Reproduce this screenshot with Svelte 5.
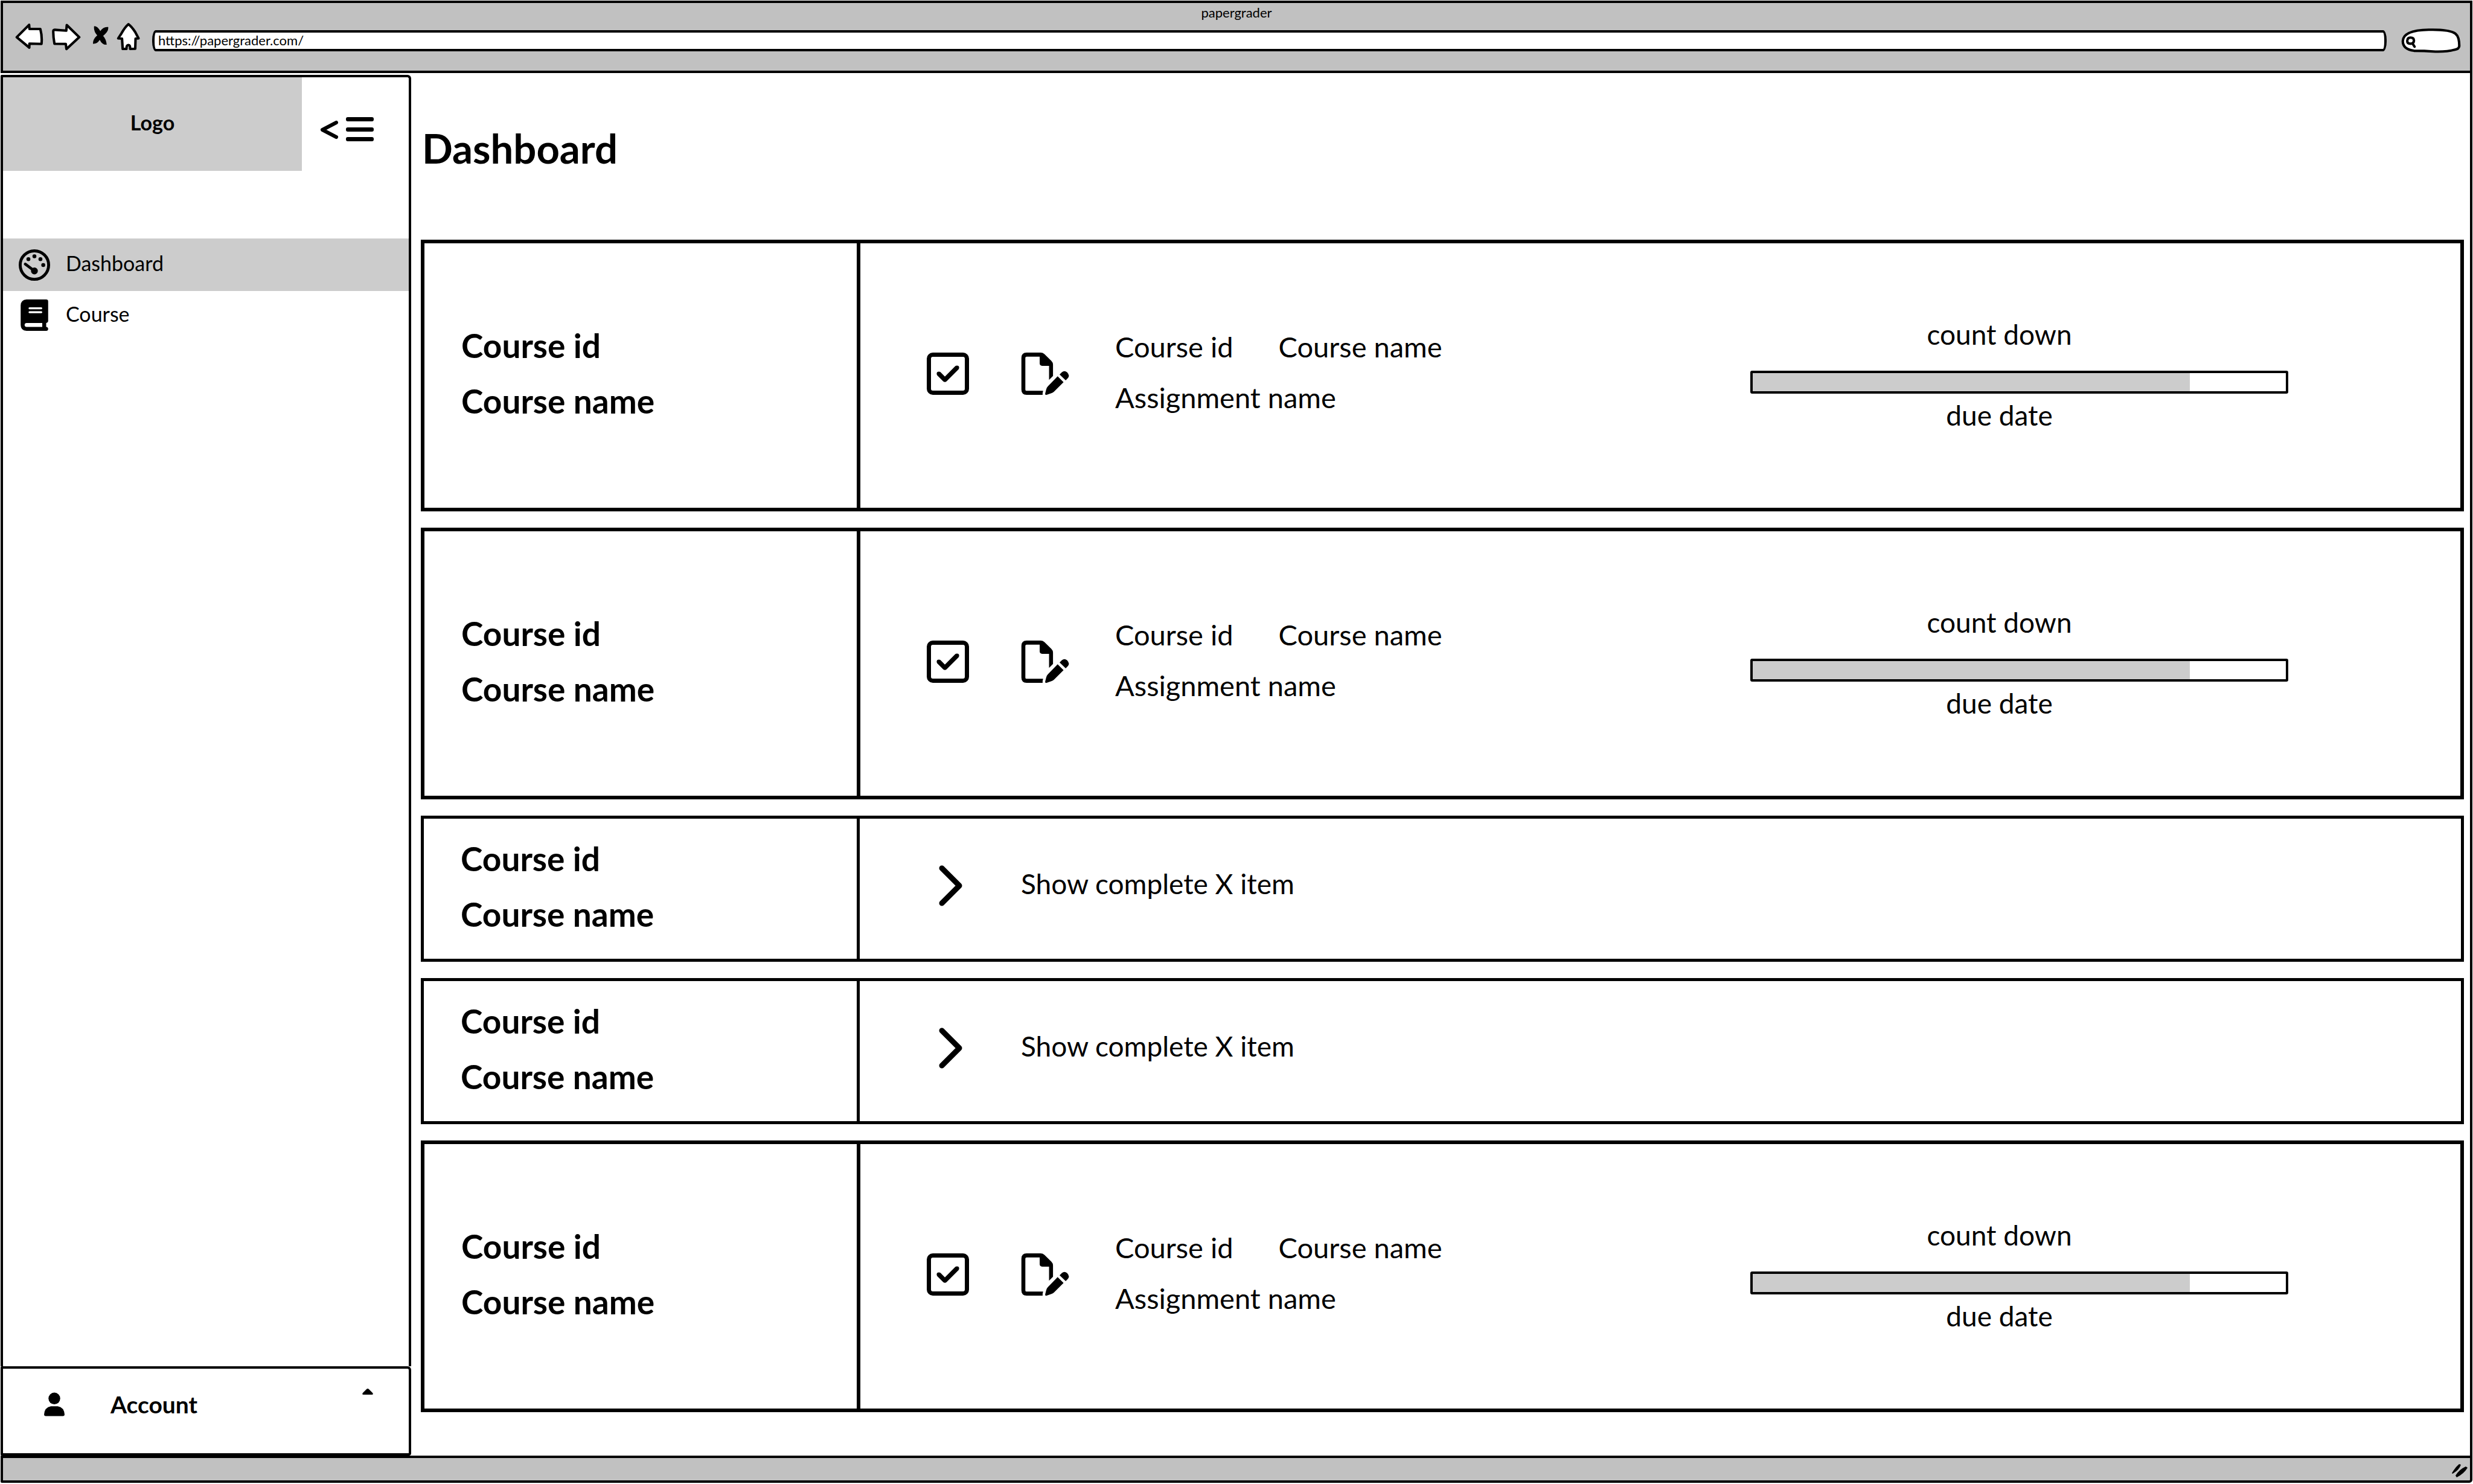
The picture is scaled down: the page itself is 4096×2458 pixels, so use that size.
<script>
  const courses = [
    { kind: 'task', done: true, progress: 82 },
    { kind: 'task', done: true, progress: 82 },
    { kind: 'summary' },
    { kind: 'summary' },
    { kind: 'task', done: true, progress: 82 }
  ];
</script>

<div class="window">
  <header class="chrome">
    <div class="title">papergrader</div>
    <div class="toolbar">
      <nav class="controls" aria-label="Browser">
        <button aria-label="Back">
          <svg width="47" height="47" viewBox="32 44 172 172" class="sketch">
            <path d="M117 59L42 134L118 197L119 173L192 175Q197 130 185 84L119 84Z" />
          </svg>
        </button>
        <button aria-label="Forward">
          <svg width="49" height="47" viewBox="252 44 180 172" class="sketch">
            <path d="M346 60L422 134L344 206L340 175L271 174Q263 130 264 96Q265 89 274 89L343 94Z" />
          </svg>
        </button>
        <button aria-label="Stop">
          <svg width="33" height="47" viewBox="478 44 122 172">
            <path d="M511 66Q532 66 549 97Q567 68 597 72Q602 96 566 126Q584 144 588 180Q562 183 545 150Q530 176 504 174Q502 148 530 123Q506 98 511 66Z" />
          </svg>
        </button>
        <button aria-label="Home">
          <svg width="39" height="47" viewBox="648 44 142 172" class="sketch">
            <path d="M720 55Q698 74 678 110L658 141L681 143L685 205L708 205Q707 181 720 181Q731 181 730 205L761 204L763 143L781 141L761 103Q742 72 720 55Z" />
          </svg>
        </button>
      </nav>
      <input class="url" type="text" aria-label="Address" value="https://papergrader.com/" />
      <label class="search">
        <svg width="99" height="43" viewBox="42 48 364 156" class="sketch" aria-hidden="true">
          <path d="M120 187Q52 178 52 128Q54 62 210 59Q340 56 374 84Q396 102 396 158Q394 176 370 180Q320 194 250 192Q180 187 120 187Z" />
          <path d="M99 107Q120 107 120 126Q118 144 99 144Q79 144 79 127Q80 107 99 107M113 146L124 162" />
        </svg>
        <input type="search" aria-label="Search" />
      </label>
    </div>
  </header>

  <div class="body">
    <aside class="side">
      <div class="panel">
        <div class="brand">
          <div class="logo">Logo</div>
          <button class="collapse" aria-label="Collapse menu">
            <svg width="94" height="46" viewBox="528 190 94 46">
              <path d="M557 202L534 214L557 226" class="line" />
              <rect x="573" y="193" width="46" height="7" rx="3" />
              <rect x="573" y="210" width="46" height="7" rx="3" />
              <rect x="573" y="226" width="46" height="7" rx="3" />
            </svg>
          </button>
        </div>
        <nav class="menu" aria-label="Main">
          <a href="#dashboard" class="active">
            <svg width="52" height="52" viewBox="0 0 512 512">
              <circle cx="256" cy="256" r="232" fill="none" stroke="#000" stroke-width="48" />
              <circle cx="256" cy="112" r="32" />
              <circle cx="158" cy="160" r="32" />
              <circle cx="354" cy="160" r="32" />
              <circle cx="400" cy="256" r="32" />
              <circle cx="256" cy="352" r="56" />
              <path d="M107 240L256 352" stroke="#000" stroke-width="46" stroke-linecap="round" />
            </svg>
            <span>Dashboard</span>
          </a>
          <a href="#course">
            <svg width="52" height="52" viewBox="-32 0 512 512">
              <path fill-rule="evenodd" d="M96 0H416Q448 0 448 32V352Q448 376 416 384V448Q448 452 448 480Q448 512 416 512H96Q0 508 0 416V96Q4 4 96 0ZM96 384Q64 386 64 416Q64 446 96 448H352V384ZM144 128Q128 130 128 144Q128 158 144 160H336Q352 158 352 144Q352 130 336 128ZM144 192Q128 194 128 208Q128 222 144 224H336Q352 222 352 208Q352 194 336 192Z" />
            </svg>
            <span>Course</span>
          </a>
        </nav>
      </div>
      <button class="account">
        <svg width="34" height="40" viewBox="89 2816 42 48">
          <circle cx="110" cy="2828" r="12" />
          <path d="M103 2844H117Q130 2846 131 2861Q131 2864 128 2864H92Q89 2864 89 2861Q90 2846 103 2844Z" />
        </svg>
        <span>Account</span>
        <svg class="caret" width="18" height="10" viewBox="0 0 18 10">
          <path d="M7 1Q9 -1 11 1L17 7Q19 10 16 10H2Q-1 10 1 7Z" />
        </svg>
      </button>
    </aside>

    <main>
      <h1>Dashboard</h1>
      <div class="cards">
        {#each courses as course}
          <section class="card {course.kind}">
            <div class="name">
              <div>Course id</div>
              <div>Course name</div>
            </div>
            {#if course.kind === 'task'}
              <div class="content">
                <label class="tick">
                  <input type="checkbox" checked={course.done} aria-label="Complete" />
                  <svg width="70" height="70" viewBox="0 32 448 448" aria-hidden="true">
                    <path d="M337 209L209 337Q192 350 175 337L111 273Q99 256 111 239Q128 227 145 239L192 286L303 175Q320 163 337 175Q349 192 337 209Z" />
                  </svg>
                </label>
                <button class="edit" aria-label="Edit assignment">
                  <svg width="80" height="72" viewBox="40 36 292 264">
                    <path d="M42 72Q42 40 74 40H158Q172 40 182 49L224 90Q234 100 234 112V182L210 206V120H168Q153 120 153 105V64H74Q66 64 66 72V264Q66 272 74 272H174Q170 284 171 296H74Q42 296 42 264Z" />
                    <path d="M262 184L298 219L240 277Q233 284 224 286L195 296Q184 298 187 286L193 262Q196 251 204 243Z" />
                    <path d="M274 173L288 159Q303 146 319 159Q338 177 325 194L311 208Z" />
                  </svg>
                </button>
                <div class="details">
                  <div class="pair"><span>Course id</span><span>Course name</span></div>
                  <div>Assignment name</div>
                </div>
                <div class="deadline">
                  <span class="caption">count down</span>
                  <progress max="100" value={course.progress} aria-label="Time used"></progress>
                  <span class="caption">due date</span>
                </div>
              </div>
            {:else}
              <button class="content">
                <svg width="70" height="70" viewBox="1534 1431 70 70">
                  <path d="M1560 1437L1589 1466L1560 1495" class="chevron" />
                </svg>
                <span class="more">Show complete X item</span>
              </button>
            {/if}
          </section>
        {/each}
      </div>
    </main>
  </div>

  <footer>
    <svg width="26" height="23" viewBox="0 0 26 23">
      <path d="M0 15Q5 6 12 0L15 1Q12 10 1 16Z" />
      <path d="M6 19Q12 9 23 4L26 6Q20 16 8 22Z" />
    </svg>
  </footer>
</div>

<style>
  :global(body) {
    margin: 0;
    background: #fff;
  }
  .window {
    box-sizing: border-box;
    display: flex;
    flex-direction: column;
    min-height: 100vh;
    padding: 1px 1px 2px;
    font-family: Lato, "Liberation Sans", sans-serif;
    font-size: 46px;
    color: #000;
  }
  .window :is(div, header, footer, aside, section, main, input, progress, button, a) {
    box-sizing: border-box;
  }
  svg {
    display: block;
    flex: none;
  }
  button {
    padding: 0;
    border: 0;
    background: none;
    font: inherit;
    color: inherit;
    text-align: left;
  }
  .sketch path {
    fill: #fff;
    stroke: #000;
    stroke-width: 15;
    stroke-linejoin: round;
    stroke-linecap: round;
  }

  .chrome {
    height: 120px;
    border: 4px solid #000;
    background: #c1c1c1;
  }
  .title {
    font-size: 22px;
    line-height: 32px;
    text-align: center;
  }
  .toolbar {
    display: flex;
    align-items: center;
    height: 60px;
    padding: 0 15px 0 20px;
  }
  .controls {
    display: flex;
    align-self: flex-start;
    gap: 13px;
    margin-right: 20px;
  }
  .url {
    flex: 1;
    min-width: 0;
    height: 35px;
    margin-right: 24px;
    padding: 0 6px 2px;
    border: 4px solid #000;
    border-radius: 6px / 16px;
    background: #fff;
    font: 22px Lato, "Liberation Sans", sans-serif;
    color: #000;
  }
  .search {
    display: grid;
  }
  .search > * {
    grid-area: 1 / 1;
  }
  .search input {
    width: 60px;
    height: 24px;
    place-self: center end;
    margin-right: 12px;
    padding: 0;
    border: 0;
    background: none;
    font-size: 20px;
  }

  .body {
    flex: 1;
    display: flex;
    border-right: 4px solid #000;
  }
  .side {
    display: flex;
    flex-direction: column;
    width: 680px;
    padding-top: 3px;
  }
  .panel {
    flex: 1;
    border: 4px solid #000;
    border-bottom: 0;
    border-radius: 2px 6px 0 0;
  }
  .brand {
    display: flex;
    margin-bottom: 112px;
  }
  .logo {
    width: 495px;
    height: 155px;
    background: #ccc;
    font-size: 34px;
    font-weight: 700;
    line-height: 149px;
    text-align: center;
  }
  .collapse {
    margin-left: 28px;
    padding-top: 16px;
  }
  .line,
  .chevron {
    fill: none;
    stroke: #000;
    stroke-width: 6;
    stroke-linecap: round;
    stroke-linejoin: round;
  }
  .chevron {
    stroke-width: 9;
  }
  .menu a {
    display: flex;
    align-items: center;
    gap: 26px;
    height: 80px;
    padding-left: 26px;
    color: #000;
    font-size: 34px;
    text-decoration: none;
  }
  .menu span {
    padding-bottom: 6px;
  }
  .menu .active {
    height: 87px;
    background: #ccc;
  }
  .account {
    display: flex;
    align-items: center;
    height: 148px;
    padding: 0 59px 22px 68px;
    border: 4px solid #000;
    border-radius: 2px 6px 4px 2px;
    font-size: 39px;
    font-weight: 700;
  }
  .account span {
    flex: 1;
    padding-left: 76px;
  }
  .caret {
    margin-bottom: 42px;
  }

  main {
    flex: 1;
    min-width: 0;
    padding: 84px 10px 0 16px;
  }
  h1 {
    margin: 0 0 112px;
    padding-left: 2px;
    font-size: 67px;
    line-height: 80px;
  }
  .cards {
    display: flex;
    flex-direction: column;
    gap: 27px;
  }
  .card {
    display: grid;
    grid-template-columns: 722px 1fr;
    border: 6px solid #000;
  }
  .task {
    min-height: 450px;
  }
  .summary {
    min-height: 242px;
    border-width: 5px;
  }
  .name {
    display: flex;
    flex-direction: column;
    justify-content: center;
    padding: 0 0 8px 61px;
    border-right: 6px solid #000;
    font-size: 55px;
    font-weight: 700;
    line-height: 92px;
  }
  .summary .name {
    border-right-width: 5px;
  }
  .content {
    display: flex;
    align-items: center;
    padding: 0 285px 6px 110px;
  }
  .summary .content {
    padding-bottom: 10px;
  }
  .tick {
    display: grid;
    margin-right: 86px;
  }
  .tick > * {
    grid-area: 1 / 1;
  }
  .tick input {
    appearance: none;
    width: 70px;
    height: 70px;
    margin: 0;
    border: 7px solid #000;
    border-radius: 10px;
  }
  .tick svg {
    visibility: hidden;
    pointer-events: none;
  }
  .tick input:checked + svg {
    visibility: visible;
  }
  .edit {
    margin-right: 76px;
  }
  .details {
    flex: 1;
    padding-bottom: 6px;
    font-size: 47px;
    line-height: 84px;
  }
  .pair {
    display: flex;
    gap: 75px;
  }
  .deadline {
    display: flex;
    flex-direction: column;
    width: 891px;
    padding-top: 4px;
    line-height: 50px;
  }
  .caption {
    padding-right: 66px;
    text-align: center;
  }
  progress {
    appearance: none;
    display: block;
    width: 100%;
    height: 38px;
    margin: 35px 0 11px;
    border: 4px solid #000;
    border-radius: 3px;
    background: #fff;
  }
  progress::-webkit-progress-bar {
    background: #fff;
  }
  progress::-webkit-progress-value {
    background: #ccc;
  }
  .more {
    padding: 0 0 8px 87px;
  }

  footer {
    display: flex;
    align-items: center;
    justify-content: flex-end;
    height: 45px;
    padding: 6px 4px 0 0;
    border: 4px solid #000;
    border-radius: 0 0 5px 2px;
    background: #c1c1c1;
  }
</style>
